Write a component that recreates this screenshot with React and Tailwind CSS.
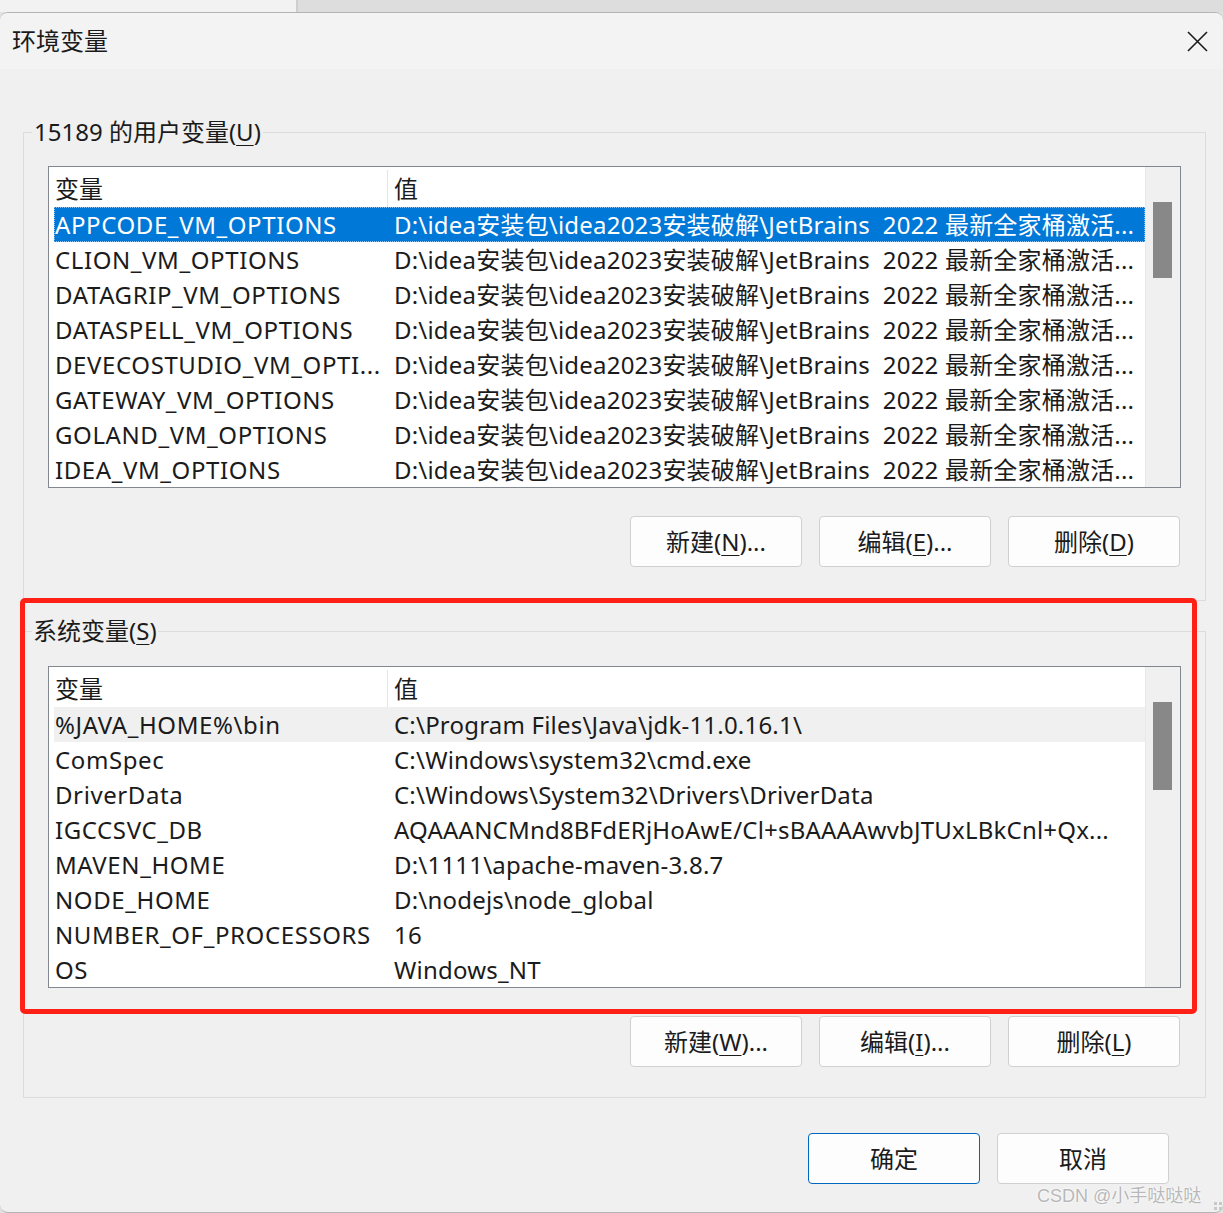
import React from "react";

const FONT = {
  fontFamily: '"Noto Sans", "Noto Sans CJK SC", sans-serif',
};

const jb = "D:\\idea安装包\\idea2023安装破解\\JetBrains  2022 最新全家桶激活...";

const userVars = [
  ["APPCODE_VM_OPTIONS", jb],
  ["CLION_VM_OPTIONS", jb],
  ["DATAGRIP_VM_OPTIONS", jb],
  ["DATASPELL_VM_OPTIONS", jb],
  ["DEVECOSTUDIO_VM_OPTI...", jb],
  ["GATEWAY_VM_OPTIONS", jb],
  ["GOLAND_VM_OPTIONS", jb],
  ["IDEA_VM_OPTIONS", jb],
];

const sysVars = [
  ["%JAVA_HOME%\\bin", "C:\\Program Files\\Java\\jdk-11.0.16.1\\"],
  ["ComSpec", "C:\\Windows\\system32\\cmd.exe"],
  ["DriverData", "C:\\Windows\\System32\\Drivers\\DriverData"],
  ["IGCCSVC_DB", "AQAAANCMnd8BFdERjHoAwE/Cl+sBAAAAwvbJTUxLBkCnl+Qx..."],
  ["MAVEN_HOME", "D:\\1111\\apache-maven-3.8.7"],
  ["NODE_HOME", "D:\\nodejs\\node_global"],
  ["NUMBER_OF_PROCESSORS", "16"],
  ["OS", "Windows_NT"],
];

// 带助记符下划线的按钮文字
const Mn = ({ pre, k, post }) => (
  <span>
    {pre}(<span className="underline underline-offset-[4px] decoration-1">{k}</span>){post}
  </span>
);

const WinButton = ({ children, primary }) => (
  <button
    className={
      primary
        ? "w-[172px] h-[51px] rounded-[4px] bg-[#fdfdfd] border border-[#0067c0] text-[24px] text-[#1b1b1b] flex items-center justify-center"
        : "w-[172px] h-[51px] rounded-[4px] bg-[#fdfdfd] border border-[#d0d0d0] text-[24px] text-[#1b1b1b] flex items-center justify-center"
    }
  >
    {children}
  </button>
);

const VarList = ({ rows, mode, thumbH }) => (
  <div className="h-[322px] border border-[#828790] bg-white flex">
    <div className="flex-1 flex flex-col min-w-0">
      {/* 表头 */}
      <div className="h-[40px] flex text-[24px] text-[#1b1b1b] shrink-0 pt-[3px]">
        <div className="w-[339px] pl-[6px] border-r border-[#e5e5e5] flex items-center">
          变量
        </div>
        <div className="flex-1 pl-[6px] flex items-center">值</div>
      </div>
      {rows.map(([k, v], i) => {
        const first = i === 0;
        let rowCls =
          "ml-[5px] h-[35px] flex items-center text-[24px] whitespace-pre overflow-hidden shrink-0";
        if (first && mode === "selected")
          rowCls += " bg-[#0078d7] text-white outline outline-1 outline-dotted outline-[#8cc0ee] -outline-offset-1";
        else if (first && mode === "hover") rowCls += " bg-[#f0f0f0] text-[#1b1b1b]";
        else rowCls += " text-[#1b1b1b]";
        return (
          <div key={k} className={rowCls}>
            <div className="w-[334px] pl-[1px] shrink-0 overflow-hidden tracking-[0.6px]">{k}</div>
            <div className="pl-[6px] overflow-hidden tracking-[0.2px]">{v}</div>
          </div>
        );
      })}
    </div>
    {/* 滚动条 */}
    <div className="w-[35px] bg-[#f0f0f0] border-l border-[#e8e8e8] pl-[7px] pt-[35px] shrink-0">
      <div className={`w-[19px] bg-[#888888] ${thumbH}`} />
    </div>
  </div>
);

export default function App() {
  return (
    <div
      className="w-[1223px] h-[1213px] bg-[#e2e2e2] overflow-hidden relative"
      style={FONT}
    >
      {/* 背后窗口的边缘 */}
      <div className="h-[12px] flex">
        <div className="w-[298px] bg-[#f2f2f2] border-r-2 border-[#cfcfcf]" />
        <div className="flex-1 bg-[#dddddd]" />
      </div>

      <div className="h-[1201px] bg-[#f0f0f0] rounded-t-[8px] rounded-b-[8px] border-t border-b border-[#b4b4b4] flex flex-col overflow-hidden">
        {/* 标题栏 */}
        <div className="h-[56px] bg-[#f3f3f3] flex items-center justify-between pl-[12px] pr-[15px] shrink-0">
          <span className="text-[24px] text-[#1b1b1b]">环境变量</span>
          <svg width="21" height="21" viewBox="0 0 21 21">
            <path d="M1 1 L20 20 M20 1 L1 20" stroke="#1b1b1b" strokeWidth="1.6" />
          </svg>
        </div>

        <div className="pl-[23px] pr-[17px] flex flex-col">
          {/* 用户变量 */}
          <fieldset className="mt-[48px] border border-[#dcdcdc] px-[24px] pb-[32px] h-[484px]">
            <legend className="-ml-[16px] px-[2px] h-[30px] leading-[30px] text-[24px] text-[#1b1b1b]">
              15189 的用户变量(<span className="underline underline-offset-[4px] decoration-1">U</span>)
            </legend>
            <div className="mt-[19px]">
              <VarList rows={userVars} mode="selected" thumbH="h-[76px]" />
            </div>
            <div className="mt-[28px] flex justify-end gap-[17px] pr-[1px]">
              <WinButton><Mn pre="新建" k="N" post="..." /></WinButton>
              <WinButton><Mn pre="编辑" k="E" post="..." /></WinButton>
              <WinButton><Mn pre="删除" k="D" post="" /></WinButton>
            </div>
          </fieldset>

          {/* 系统变量 */}
          <fieldset className="mt-[15px] border border-[#dcdcdc] px-[24px] h-[482px]">
            <legend className="-ml-[16px] px-[1px] h-[30px] leading-[30px] text-[24px] text-[#1b1b1b]">
              系统变量(<span className="underline underline-offset-[4px] decoration-1">S</span>)
            </legend>
            <div className="mt-[20px]">
              <VarList rows={sysVars} mode="hover" thumbH="h-[88px]" />
            </div>
            <div className="mt-[28px] flex justify-end gap-[17px] pr-[1px]">
              <WinButton><Mn pre="新建" k="W" post="..." /></WinButton>
              <WinButton><Mn pre="编辑" k="I" post="..." /></WinButton>
              <WinButton><Mn pre="删除" k="L" post="" /></WinButton>
            </div>
          </fieldset>

          <div className="mt-[35px] flex justify-end gap-[17px] pr-[37px]">
            <WinButton primary>确定</WinButton>
            <WinButton>取消</WinButton>
          </div>
        </div>
      </div>

      {/* 红色标注框 */}
      <div className="absolute left-[20px] top-[598px] w-[1177px] h-[416px] border-[5px] border-[#ff2116] rounded-[5px] pointer-events-none" />

      {/* 水印 */}
      <div
        className="absolute left-[1037px] top-[1183px] text-[18px] text-[#b8b8b8] whitespace-nowrap"
        style={{
          fontFamily: '"Liberation Sans", "Noto Sans CJK SC", sans-serif',
          textShadow: "0 0 2px #fff, 0 0 2px #fff",
        }}
      >
        CSDN @小手哒哒哒
      </div>
      <div className="absolute left-[1214px] top-[1202px] grid grid-cols-2 gap-[2px]">
        <div className="w-[3px] h-[3px] bg-[#c8c8c8]" />
        <div className="w-[3px] h-[3px] bg-[#c8c8c8]" />
        <div className="w-[3px] h-[3px] bg-[#c8c8c8]" />
        <div className="w-[3px] h-[3px] bg-[#c8c8c8]" />
      </div>
    </div>
  );
}
